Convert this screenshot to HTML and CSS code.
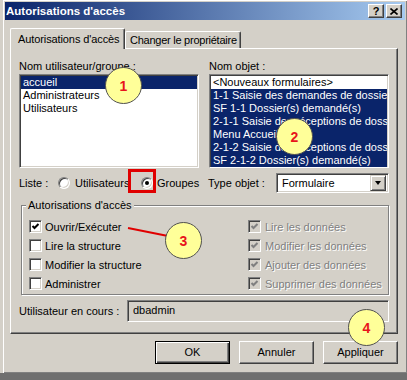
FILE: index.html
```html
<!DOCTYPE html>
<html lang="fr">
<head>
    <meta charset="UTF-8">
    <meta name="viewport" content="width=device-width, initial-scale=1.0">
    <title>Autorisations d'accès</title>
    <link rel="stylesheet" href="styles.css">
</head>
<body>
    <div class="ecran">
        <div class="fenetre">
            <div class="titre">
                <span class="titre-texte">Autorisations d'accès</span>
                <div class="titre-btns">
                    <span class="tbtn">?</span>
                    <span class="tbtn">
                        <svg width="8" height="7" viewBox="0 0 8 7"><path d="M0.5 0.5L7.5 6.5M7.5 0.5L0.5 6.5" stroke="#000" stroke-width="1.6"/></svg>
                    </span>
                </div>
            </div>
            <div class="contenu">
                <div class="onglets">
                    <div class="onglet actif">Autorisations d'accès</div>
                    <div class="onglet">Changer le propriétaire</div>
                </div>
                <div class="page">
                    <div class="listes">
                        <div class="col">
                            <div class="lbl">Nom utilisateur/groupe :</div>
                            <div class="liste">
                                <div class="item sel">accueil</div>
                                <div class="item">Administrateurs</div>
                                <div class="item">Utilisateurs</div>
                            </div>
                        </div>
                        <div class="col">
                            <div class="lbl">Nom objet :</div>
                            <div class="liste">
                                <div class="item">&lt;Nouveaux formulaires&gt;</div>
                                <div class="item sel">1-1 Saisie des demandes de dossier de</div>
                                <div class="item sel">SF 1-1 Dossier(s) demandé(s)</div>
                                <div class="item sel">2-1-1 Saisie des réceptions de dossiers</div>
                                <div class="item sel">Menu Accueil</div>
                                <div class="item sel">2-1-2 Saisie des réceptions de dossiers</div>
                                <div class="item sel">SF 2-1-2 Dossier(s) demandé(s)</div>
                            </div>
                        </div>
                    </div>
                    <div class="ligne">
                        <div class="col choix">
                            <span class="lbl-liste">Liste :</span>
                            <span class="radio"></span><span class="opt">Utilisateurs</span>
                            <span class="radio coche"></span><span class="opt">Groupes</span>
                        </div>
                        <div class="col type">
                            <span class="lbl-type">Type objet :</span>
                            <div class="combo">
                                <span>Formulaire</span>
                                <span class="fleche"></span>
                            </div>
                        </div>
                    </div>
                    <fieldset class="groupe">
                        <legend>Autorisations d'accès</legend>
                        <div class="cases">
                            <div class="case"><span class="cb"><svg width="9" height="9" viewBox="0 0 9 9"><path d="M1.5 4L3.5 6L7.5 2" fill="none" stroke="#000" stroke-width="2"/></svg></span>Ouvrir/Exécuter</div>
                            <div class="case"><span class="cb"></span>Lire la structure</div>
                            <div class="case"><span class="cb"></span>Modifier la structure</div>
                            <div class="case"><span class="cb"></span>Administrer</div>
                            <div class="case off"><span class="cb"><svg width="9" height="9" viewBox="0 0 9 9"><path d="M1.5 4L3.5 6L7.5 2" fill="none" stroke="#808080" stroke-width="2"/></svg></span>Lire les données</div>
                            <div class="case off"><span class="cb"><svg width="9" height="9" viewBox="0 0 9 9"><path d="M1.5 4L3.5 6L7.5 2" fill="none" stroke="#808080" stroke-width="2"/></svg></span>Modifier les données</div>
                            <div class="case off"><span class="cb"><svg width="9" height="9" viewBox="0 0 9 9"><path d="M1.5 4L3.5 6L7.5 2" fill="none" stroke="#808080" stroke-width="2"/></svg></span>Ajouter des données</div>
                            <div class="case off"><span class="cb"><svg width="9" height="9" viewBox="0 0 9 9"><path d="M1.5 4L3.5 6L7.5 2" fill="none" stroke="#808080" stroke-width="2"/></svg></span>Supprimer des données</div>
                        </div>
                    </fieldset>
                    <div class="courant">
                        <span class="lbl-courant">Utilisateur en cours :</span>
                        <div class="champ">dbadmin</div>
                    </div>
                </div>
                <div class="boutons">
                    <div class="btn defaut">OK</div>
                    <div class="btn">Annuler</div>
                    <div class="btn">Appliquer</div>
                </div>
            </div>
        </div>

        <!-- annotations -->
        <div class="cadre-rouge"></div>
        <svg class="trait" width="44" height="14" viewBox="0 0 44 14"><path d="M1 2L41 10" stroke="#e00000" stroke-width="2"/></svg>
        <div class="bulle b1">1</div>
        <div class="bulle b2">2</div>
        <div class="bulle b3">3</div>
        <div class="bulle b4">4</div>
    </div>
</body>
</html>
```

FILE: styles.css
```css
* {
    margin: 0;
    padding: 0;
    box-sizing: border-box;
}
body {
    width: 407px;
    height: 380px;
    overflow: hidden;
    background-color: #6f6f6f;
    font-family: "Liberation Sans", Arial, sans-serif;
    font-size: 11px;
    color: #000;
}
.ecran {
    position: relative;
    height: 373px;
    overflow: hidden;
    background-color: #d4d0c8;
}
.fenetre {
    margin: -1px 0 0 2px;
    width: 406px;
    height: 375px;
    padding: 2px;
    background-color: #d4d0c8;
    border: 1px solid;
    border-color: #d4d0c8 #404040 #404040 #d4d0c8;
    box-shadow: inset 1px 1px #fff, inset -1px -1px #808080;
}

/* barre de titre */
.titre {
    display: flex;
    align-items: center;
    justify-content: space-between;
    height: 18px;
    padding: 0 3px 0 1px;
    background: linear-gradient(to right, #0a246a, #a6caf0);
}
.titre-texte {
    color: #fff;
    font-weight: bold;
    font-size: 11.5px;
}
.titre-btns {
    display: flex;
    gap: 2px;
}
.tbtn {
    display: flex;
    align-items: center;
    justify-content: center;
    width: 16px;
    height: 14px;
    background-color: #d4d0c8;
    border: 1px solid;
    border-color: #fff #404040 #404040 #fff;
    box-shadow: inset -1px -1px #808080;
    font-weight: bold;
    font-size: 11px;
    line-height: 1;
}

/* onglets */
.contenu {
    padding-top: 8px;
}
.onglets {
    display: flex;
    align-items: flex-end;
    height: 20px;
    margin-left: 5px;
}
.onglet {
    width: 116px;
    height: 17px;
    padding-left: 4px;
    line-height: 16px;
    white-space: nowrap;
    overflow: hidden;
    letter-spacing: -0.25px;
    border: 1px solid;
    border-bottom: none;
    border-color: #fff #404040 #fff #fff;
    border-radius: 2px 2px 0 0;
    box-shadow: inset -1px 0 #808080;
    background-color: #d4d0c8;
}
.onglet.actif {
    position: relative;
    z-index: 1;
    width: 115px;
    height: 21px;
    margin-bottom: -1px;
    padding-left: 7px;
    line-height: 21px;
    letter-spacing: -0.1px;
}

/* page de l'onglet */
.page {
    margin-left: 5px;
    width: 388px;
    height: 286px;
    padding: 11px 8px 0 8px;
    border: 1px solid;
    border-color: #fff #404040 #404040 #fff;
    box-shadow: inset -1px -1px #808080;
}
.listes, .ligne {
    display: flex;
    gap: 10px;
}
.col {
    width: 180px;
}
.lbl {
    height: 13px;
    line-height: 13px;
    margin-bottom: 1px;
}
.liste {
    height: 94px;
    overflow: hidden;
    background-color: #fff;
    border: 1px solid;
    border-color: #808080 #fff #fff #808080;
    box-shadow: inset 1px 1px #404040, inset -1px -1px #d4d0c8;
    padding: 1px;
}
.item {
    height: 13px;
    line-height: 13px;
    padding-left: 2px;
    white-space: nowrap;
    overflow: hidden;
}
.item.sel {
    background-color: #0a246a;
    color: #fff;
}

/* liste / type objet */
.ligne {
    margin-top: 5px;
    height: 20px;
}
.choix, .type {
    display: flex;
    align-items: center;
}
.lbl-liste {
    width: 39px;
    flex-shrink: 0;
}
.radio {
    position: relative;
    flex-shrink: 0;
    width: 12px;
    height: 12px;
    border-radius: 50%;
    background-color: #fff;
    border: 1px solid;
    border-color: #808080 #fff #fff #808080;
    box-shadow: inset 1px 1px #404040, inset -1px -1px #d4d0c8;
}
.radio.coche::after {
    content: "";
    position: absolute;
    left: 3px;
    top: 3px;
    width: 4px;
    height: 4px;
    border-radius: 50%;
    background-color: #000;
}
.opt {
    margin-left: 5px;
    width: 66px;
    flex-shrink: 0;
    white-space: nowrap;
}
.opt:last-child {
    width: auto;
    margin-left: 4px;
}
.type {
    justify-content: space-between;
}
.lbl-type {
    margin-left: -1px;
}
.combo {
    display: flex;
    align-items: center;
    justify-content: space-between;
    width: 113px;
    height: 20px;
    padding: 2px 2px 2px 5px;
    background-color: #fff;
    border: 1px solid;
    border-color: #808080 #fff #fff #808080;
    box-shadow: inset 1px 1px #404040, inset -1px -1px #d4d0c8;
}
.fleche {
    display: flex;
    align-items: center;
    justify-content: center;
    width: 16px;
    height: 16px;
    background-color: #d4d0c8;
    border: 1px solid;
    border-color: #d4d0c8 #404040 #404040 #d4d0c8;
    box-shadow: inset 1px 1px #fff, inset -1px -1px #808080;
}
.fleche::after {
    content: "";
    border-left: 3.5px solid transparent;
    border-right: 3.5px solid transparent;
    border-top: 4px solid #000;
}

/* groupe des autorisations */
.groupe {
    margin: 6px 0 0 2px;
    width: 368px;
    padding: 5px 0 1px 7px;
    border: 1px solid #808080;
    box-shadow: inset 1px 1px #fff, 1px 1px #fff;
}
.groupe legend {
    margin-left: -3px;
    padding: 0 2px;
    line-height: 13px;
    background-color: #d4d0c8;
}
.cases {
    display: grid;
    grid-template-columns: 219px 1fr;
    grid-template-rows: repeat(4, 19px);
    grid-auto-flow: column;
}
.case {
    display: flex;
    align-items: center;
}
.cb {
    display: flex;
    align-items: center;
    justify-content: center;
    width: 13px;
    height: 13px;
    margin-right: 3px;
    background-color: #fff;
    border: 1px solid;
    border-color: #808080 #fff #fff #808080;
    box-shadow: inset 1px 1px #404040, inset -1px -1px #d4d0c8;
}
.case.off {
    color: #808080;
    text-shadow: 1px 1px #fff;
}
.case.off .cb {
    background-color: #d4d0c8;
    margin-right: 4px;
}

/* utilisateur courant */
.courant {
    display: flex;
    align-items: center;
    margin-top: 5px;
}
.lbl-courant {
    width: 108px;
}
.champ {
    width: 262px;
    height: 22px;
    line-height: 18px;
    padding-left: 5px;
    border: 1px solid;
    border-color: #808080 #fff #fff #808080;
    box-shadow: inset 1px 1px #404040, inset -1px -1px #d4d0c8;
}

/* boutons */
.boutons {
    display: flex;
    justify-content: flex-end;
    gap: 9px;
    margin: 7px 0 0 5px;
    width: 388px;
}
.btn {
    width: 75px;
    height: 23px;
    line-height: 21px;
    text-align: center;
    border: 1px solid;
    border-color: #fff #404040 #404040 #fff;
    box-shadow: inset -1px -1px #808080;
}
.btn.defaut {
    border-color: #000;
    box-shadow: inset 1px 1px #fff, inset -1px -1px #404040, inset -2px -2px #808080;
}

/* annotations */
.cadre-rouge {
    position: absolute;
    left: 128px;
    top: 169px;
    width: 28px;
    height: 24px;
    border: 3px solid #e00000;
}
.trait {
    position: absolute;
    left: 127px;
    top: 226px;
}
.bulle {
    position: absolute;
    display: flex;
    align-items: center;
    justify-content: center;
    width: 37px;
    height: 37px;
    border-radius: 50%;
    background-color: #ffff99;
    border: 1px solid #505050;
    color: #e8141c;
    font-weight: bold;
    font-size: 14px;
}
.b1 { left: 105px; top: 67px; }
.b2 { left: 276px; top: 118px; }
.b3 { left: 165px; top: 222px; }
.b4 { left: 348px; top: 309px; }
```
